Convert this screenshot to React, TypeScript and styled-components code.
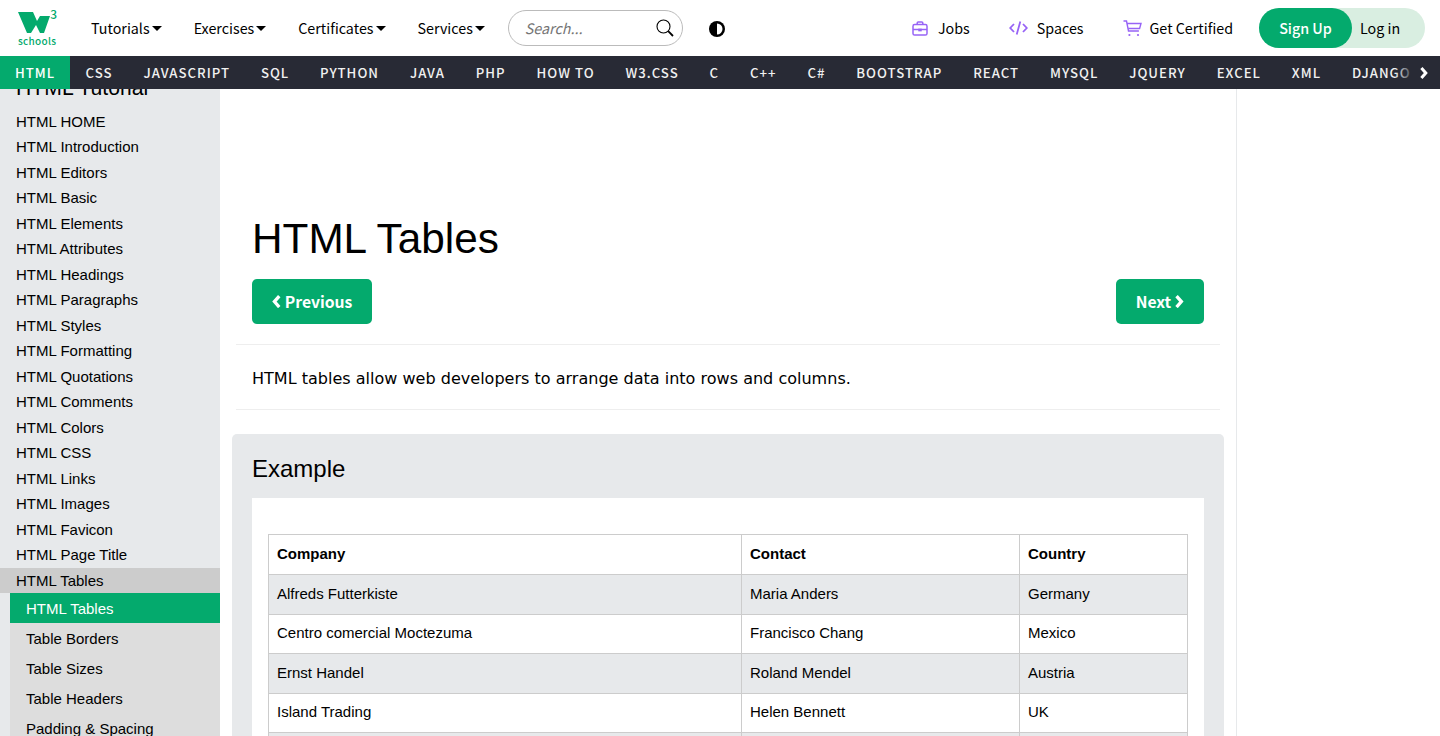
import React from "react";
import styled, { createGlobalStyle } from "styled-components";

const GREEN = "#04aa6d";
const SOURCE = `"Noto Sans CJK SC", "Noto Sans", sans-serif`;
const ARIAL = `"Liberation Sans", Arial, sans-serif`;

const GlobalStyle = createGlobalStyle`
  html, body {
    margin: 0;
    padding: 0;
    height: 736px;
    overflow: hidden;
    background: #fff;
    color: #000;
    font-family: ${ARIAL};
  }
  * { box-sizing: border-box; }
`;

const Page = styled.div`
  width: 1440px;
  height: 736px;
  display: flex;
  flex-direction: column;
  overflow: hidden;
`;

const Header = styled.header`
  height: 56px;
  flex: none;
  display: flex;
  align-items: center;
  font-family: ${SOURCE};
  font-size: 14.3px;
`;

const Label = styled.span`
  display: block;
  margin-top: -2px;
`;

const Logo = styled.a`
  position: relative;
  width: 40px;
  height: 38px;
  margin-left: 18px;
  margin-right: 33px;
  color: ${GREEN};
  display: block;
`;

const LogoThree = styled.span`
  position: absolute;
  right: 1px;
  top: 0;
  font-size: 12px;
  line-height: 10px;
  font-weight: 500;
`;

const LogoWord = styled.span`
  position: absolute;
  left: 0;
  bottom: 1px;
  font-size: 10px;
  line-height: 11px;
  font-weight: 500;
  letter-spacing: 0.3px;
`;

const MenuItem = styled.a`
  display: flex;
  align-items: center;
  gap: 2px;
  color: #000;
  margin-right: 32px;
`;

const Caret = styled.i`
  display: block;
  width: 0;
  height: 0;
  border-left: 5px solid transparent;
  border-right: 5px solid transparent;
  border-top: 5px solid #000;
`;

const SearchBox = styled.div`
  width: 175px;
  height: 36px;
  margin-left: -9px;
  border: 1px solid #bbb;
  border-radius: 18px;
  display: flex;
  align-items: center;
  justify-content: space-between;
  padding: 0 8px 0 16px;
  color: #757575;
  font-style: italic;
`;

const ContrastButton = styled.span`
  display: block;
  width: 16px;
  height: 16px;
  margin-left: 26px;
`;

const RightLinks = styled.div`
  margin-left: auto;
  display: flex;
  align-items: center;
`;

const PurpleLink = styled.a<{ $gap: number; $after: number }>`
  display: flex;
  align-items: center;
  gap: ${(p) => p.$gap}px;
  margin-right: ${(p) => p.$after}px;
  color: #000;
`;

const AuthPill = styled.div`
  width: 166px;
  height: 40px;
  margin-right: 15px;
  border-radius: 20px;
  background: #d9eee1;
  display: flex;
  align-items: center;
`;

const SignUp = styled.a`
  width: 93px;
  height: 40px;
  border-radius: 20px;
  background: ${GREEN};
  color: #fff;
  font-weight: 500;
  display: flex;
  align-items: center;
  justify-content: center;
`;

const LogIn = styled.a`
  margin-left: 8px;
  color: #000;
`;

const TopNav = styled.nav`
  position: relative;
  z-index: 2;
  height: 33px;
  flex: none;
  background: #282a35;
  display: flex;
  align-items: center;
  overflow: hidden;
  font-family: ${SOURCE};
  font-size: 13.2px;
  font-weight: 500;
  letter-spacing: 1px;
  color: #f1f1f1;
`;

const NavLink = styled.a<{ $active?: boolean }>`
  flex: none;
  height: 33px;
  padding: 0 ${(p) => (p.$active ? 15 : 15.45)}px;
  display: flex;
  align-items: center;
  background: ${(p) => (p.$active ? GREEN : "transparent")};
  color: ${(p) => (p.$active ? "#fff" : "#f1f1f1")};
`;

const NavEnd = styled.div`
  position: absolute;
  right: 0;
  top: 0;
  width: 45px;
  height: 33px;
  background: linear-gradient(to right, rgba(40, 42, 53, 0) 0, #282a35 44%);
  display: flex;
  align-items: center;
  justify-content: flex-end;
  padding-right: 12px;
`;

const Body = styled.div`
  flex: 1;
  min-height: 0;
  display: flex;
`;

const Sidebar = styled.aside`
  width: 220px;
  flex: none;
  background: #e7e9eb;
  overflow: hidden;
  font-size: 15px;
`;

const SideTitle = styled.h2`
  margin: -13px 0 8.5px;
  padding-left: 16px;
  font-size: 21.2px;
  line-height: 24px;
  font-weight: 400;
`;

const SideItem = styled.a<{ $current?: boolean }>`
  display: block;
  height: 25.5px;
  line-height: 25.5px;
  padding-left: 16px;
  color: #000;
  background: ${(p) => (p.$current ? "#cccccc" : "transparent")};
`;

const SubMenu = styled.div`
  margin-left: 10px;
  background: #dddddd;
`;

const SubItem = styled.a<{ $active?: boolean }>`
  display: block;
  height: 30px;
  line-height: 32px;
  padding-left: 16px;
  color: ${(p) => (p.$active ? "#fff" : "#000")};
  background: ${(p) => (p.$active ? GREEN : "transparent")};
`;

const Main = styled.main`
  width: 1017px;
  flex: none;
  padding: 0 16px;
  border-right: 1px solid #e7e9eb;
`;

const Title = styled.h1`
  margin: 0;
  padding: 124px 0 0 16px;
  height: 190px;
  font-size: 42.3px;
  line-height: 52px;
  font-weight: 400;
`;

const Pager = styled.div`
  display: flex;
  justify-content: space-between;
  padding: 0 16px;
`;

const PagerButton = styled.a`
  height: 45px;
  padding: 0 20px;
  border-radius: 5px;
  background: ${GREEN};
  color: #fff;
  font-family: ${SOURCE};
  font-size: 15.7px;
  font-weight: 700;
  display: flex;
  align-items: center;
  gap: 4px;
`;

const Rule = styled.hr<{ $top: number }>`
  margin: ${(p) => p.$top}px 0 0;
  border: 0;
  border-top: 1px solid #eeeeee;
`;

const Intro = styled.p`
  margin: 0;
  height: 64px;
  padding-left: 16px;
  font-family: "DejaVu Sans", Verdana, sans-serif;
  font-size: 16.05px;
  line-height: 68px;
`;

const ExampleBox = styled.section`
  margin: 24px -4px 0;
  padding: 17px 20px 16px;
  border-radius: 5px;
  background: #e7e9eb;
`;

const ExampleTitle = styled.h3`
  margin: 0 0 11px;
  font-size: 24px;
  line-height: 36px;
  font-weight: 400;
`;

const WhiteBox = styled.div`
  background: #fff;
  padding: 36px 16px 16px;
`;

const Table = styled.table`
  width: 919px;
  border-collapse: collapse;
  table-layout: fixed;
  font-size: 15px;
`;

const HeadCell = styled.th<{ $width: number }>`
  width: ${(p) => p.$width}px;
  height: 40px;
  padding: 7px 8px 9px;
  border: 1px solid #cccccc;
  text-align: left;
  font-weight: 700;
`;

const Row = styled.tr`
  &:nth-child(odd) {
    background: #e7e9eb;
  }
`;

const Cell = styled.td`
  height: 39.5px;
  padding: 7px 8px 9px;
  border: 1px solid #cccccc;
`;

const NAV_ITEMS = [
  "CSS", "JAVASCRIPT", "SQL", "PYTHON", "JAVA", "PHP", "HOW TO", "W3.CSS", "C", "C++", "C#",
  "BOOTSTRAP", "REACT", "MYSQL", "JQUERY", "EXCEL", "XML", "DJANGO",
];

const SIDE_ITEMS = [
  "HTML HOME", "HTML Introduction", "HTML Editors", "HTML Basic", "HTML Elements", "HTML Attributes",
  "HTML Headings", "HTML Paragraphs", "HTML Styles", "HTML Formatting", "HTML Quotations", "HTML Comments",
  "HTML Colors", "HTML CSS", "HTML Links", "HTML Images", "HTML Favicon", "HTML Page Title",
];

const SUB_ITEMS = ["Table Borders", "Table Sizes", "Table Headers", "Padding & Spacing"];

const ROWS = [
  ["Alfreds Futterkiste", "Maria Anders", "Germany"],
  ["Centro comercial Moctezuma", "Francisco Chang", "Mexico"],
  ["Ernst Handel", "Roland Mendel", "Austria"],
  ["Island Trading", "Helen Bennett", "UK"],
  ["Laughing Bacchus Winecellars", "Yoshi Tannamuri", "Canada"],
];

const PURPLE = "#9763f6";

const LogoMark = () => (
  <svg width="32" height="21" viewBox="0 0 32 21" style={{ position: "absolute", left: 0, top: 3 }}>
    <path fill={GREEN} d="M0 0h15l4 9 3-5h10l-6 17h-4l-4-8-5 8H9z" />
  </svg>
);

const SearchIcon = () => (
  <svg width="18" height="18" viewBox="0 0 18 18" fill="none" stroke="#000">
    <circle cx="7.500" cy="7.500" r="6.500" strokeWidth="1.100" />
    <path d="M12.200 12.200l4.800 4.800" strokeWidth="1.800" />
  </svg>
);

const ContrastIcon = () => (
  <svg width="16" height="16" viewBox="0 0 16 16">
    <circle cx="8" cy="8" r="8" fill="#000" />
    <path d="M8 2.500a5.500 5.500 0 0 1 0 11z" fill="#fff" />
  </svg>
);

const JobsIcon = () => (
  <svg width="16" height="15" viewBox="0 0 16 15" fill="none" stroke={PURPLE} strokeWidth="1.500">
    <rect x="1" y="3.600" width="14" height="10.400" rx="1.600" />
    <path d="M5.200 3.600V2a1 1 0 0 1 1-1h3.600a1 1 0 0 1 1 1v1.600M1 8.400h14" />
    <path d="M7 8.400h2v1.200H7z" fill={PURPLE} />
  </svg>
);

const CodeIcon = () => (
  <svg width="19" height="14" viewBox="0 0 19 14" fill="none" stroke={PURPLE} strokeWidth="1.800">
    <path d="M5 3L1.200 7 5 11M14 3l3.800 4L14 11M11.300 0.500L7.700 13.500" />
  </svg>
);

const CartIcon = () => (
  <svg width="19" height="17" viewBox="0 0 19 17" fill="none" stroke={PURPLE} strokeWidth="1.400">
    <path d="M0.500 1h3l2 10h10.400" />
    <path d="M4 3.500h14l-1.400 5H5.200" />
    <circle cx="6.400" cy="15" r="1.100" fill={PURPLE} stroke="none" />
    <circle cx="15" cy="15" r="1.100" fill={PURPLE} stroke="none" />
  </svg>
);

const Chevron = ({ left, size = 11, weight = 3 }: { left?: boolean; size?: number; weight?: number }) => (
  <svg width={size * 0.8} height={size * 1.2} viewBox="0 0 8 12" fill="none" stroke="#fff" strokeWidth={weight}>
    <path d={left ? "M6.600 1L2.200 6l4.400 5" : "M1.400 1L5.800 6l-4.400 5"} />
  </svg>
);

const App = () => (
  <Page>
    <GlobalStyle />
    <Header>
      <Logo>
        <LogoMark />
        <LogoThree>3</LogoThree>
        <LogoWord>schools</LogoWord>
      </Logo>
      {["Tutorials", "Exercises", "Certificates", "Services"].map((label) => (
        <MenuItem key={label}>
          <Label>{label}</Label>
          <Caret />
        </MenuItem>
      ))}
      <SearchBox>
        <Label>Search...</Label>
        <SearchIcon />
      </SearchBox>
      <ContrastButton>
        <ContrastIcon />
      </ContrastButton>
      <RightLinks>
        <PurpleLink $gap={10} $after={39}>
          <JobsIcon />
          <Label>Jobs</Label>
        </PurpleLink>
        <PurpleLink $gap={9} $after={39}>
          <CodeIcon />
          <Label>Spaces</Label>
        </PurpleLink>
        <PurpleLink $gap={8} $after={26}>
          <CartIcon />
          <Label>Get Certified</Label>
        </PurpleLink>
        <AuthPill>
          <SignUp>
            <Label>Sign Up</Label>
          </SignUp>
          <LogIn>
            <Label>Log in</Label>
          </LogIn>
        </AuthPill>
      </RightLinks>
    </Header>
    <TopNav>
      <NavLink $active>HTML</NavLink>
      {NAV_ITEMS.map((item) => (
        <NavLink key={item}>{item}</NavLink>
      ))}
      <NavEnd>
        <Chevron size={10} />
      </NavEnd>
    </TopNav>
    <Body>
      <Sidebar>
        <SideTitle>HTML Tutorial</SideTitle>
        {SIDE_ITEMS.map((item) => (
          <SideItem key={item}>{item}</SideItem>
        ))}
        <SideItem $current>HTML Tables</SideItem>
        <SubMenu>
          <SubItem $active>HTML Tables</SubItem>
          {SUB_ITEMS.map((item) => (
            <SubItem key={item}>{item}</SubItem>
          ))}
        </SubMenu>
      </Sidebar>
      <Main>
        <Title>HTML Tables</Title>
        <Pager>
          <PagerButton>
            <Chevron left />
            Previous
          </PagerButton>
          <PagerButton>
            Next
            <Chevron />
          </PagerButton>
        </Pager>
        <Rule $top={20} />
        <Intro>HTML tables allow web developers to arrange data into rows and columns.</Intro>
        <Rule $top={0} />
        <ExampleBox>
          <ExampleTitle>Example</ExampleTitle>
          <WhiteBox>
            <Table>
              <thead>
                <tr>
                  <HeadCell $width={473}>Company</HeadCell>
                  <HeadCell $width={278}>Contact</HeadCell>
                  <HeadCell $width={168}>Country</HeadCell>
                </tr>
              </thead>
              <tbody>
                {ROWS.map((row) => (
                  <Row key={row[0]}>
                    {row.map((cell) => (
                      <Cell key={cell}>{cell}</Cell>
                    ))}
                  </Row>
                ))}
              </tbody>
            </Table>
          </WhiteBox>
        </ExampleBox>
      </Main>
    </Body>
  </Page>
);

export default App;
